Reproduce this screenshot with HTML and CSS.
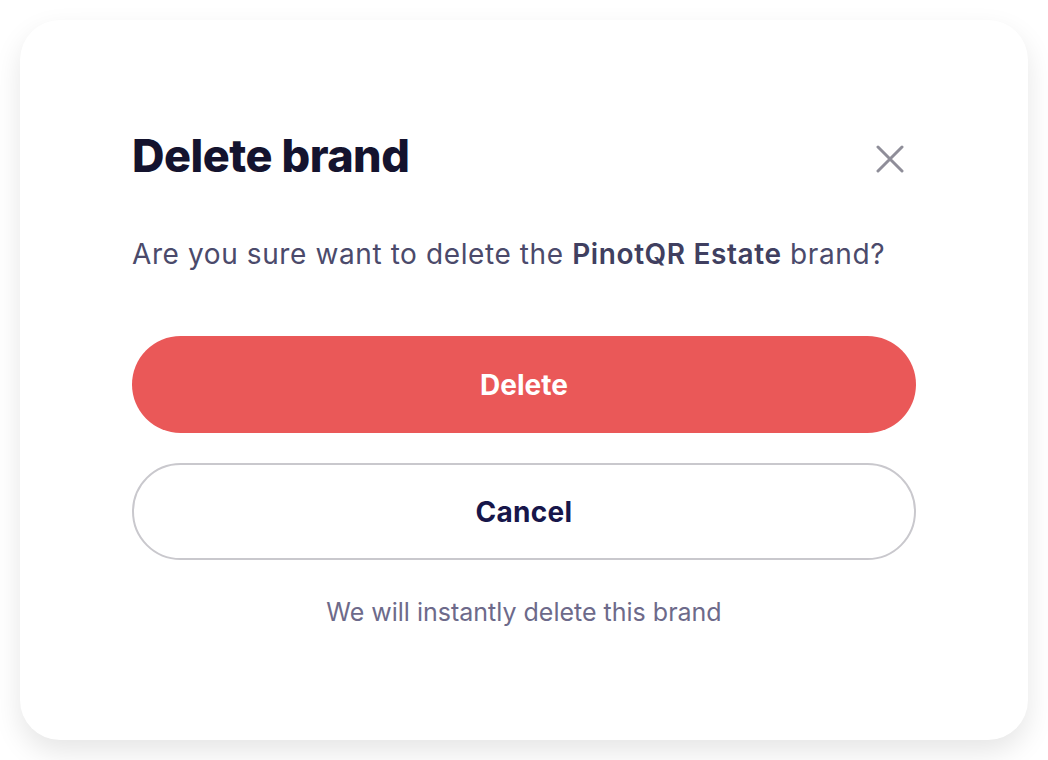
FILE: index.html
```html
<!DOCTYPE html>
<html lang="en">
<head>
<meta charset="utf-8">
<title>Delete brand</title>
<link rel="stylesheet" href="styles.css">
</head>
<body>
<div class="modal">
  <div class="modal-header">
    <h1 class="title">Delete brand</h1>
    <button class="close" aria-label="Close">
      <svg width="28" height="28" viewBox="0 0 28 28"><path d="M2 2L26 26M26 2L2 26" stroke="#8f8e99" stroke-width="3" stroke-linecap="round"/></svg>
    </button>
  </div>
  <p class="message">Are you sure want to delete the <strong>PinotQR Estate</strong> brand?</p>
  <div class="actions">
    <button class="btn btn-danger">Delete</button>
    <button class="btn btn-outline">Cancel</button>
  </div>
  <p class="note">We will instantly delete this brand</p>
</div>
</body>
</html>
```
FILE: styles.css
```css
* { box-sizing: border-box; }
html, body { margin: 0; padding: 0; background: #ffffff; }
body {
  font-family: "Inter", "Noto Sans", sans-serif;
  width: 1048px;
  height: 760px;
  padding: 20px 20px;
  overflow: hidden;
}
.modal {
  background: #fff;
  border-radius: 40px;
  height: 720px;
  padding: 100px 112px 0 112px;
  box-shadow: 0 12px 28px rgba(0, 0, 0, 0.10);
}
.modal-header {
  display: flex;
  justify-content: space-between;
  align-items: center;
}
.title {
  margin: 0;
  font-size: 45px;
  font-weight: 800;
  color: #14132e;
  letter-spacing: -0.5px;
  line-height: 72px;
}
.close {
  background: none;
  border: 0;
  padding: 0;
  margin: 6px 12px 0 0;
  width: 28px;
  height: 28px;
  display: flex;
}
.message {
  margin: 42px 0 0 0;
  font-size: 28px;
  letter-spacing: 0.6px;
  line-height: 40px;
  color: #4b4a6b;
}
.message strong { font-weight: 600; color: #403f60; }
.actions {
  margin-top: 62px;
  display: flex;
  flex-direction: column;
  gap: 30px;
}
.btn {
  height: 97px;
  border-radius: 50px;
  font-family: inherit;
  font-size: 28px;
  font-weight: 700;
  cursor: pointer;
}
.btn-danger {
  background: #ea5858;
  border: 0;
  color: #fff;
}
.btn-outline {
  background: #fff;
  border: 2px solid #c9c8cd;
  color: #17164a;
  letter-spacing: 0.3px;
}
.note {
  margin: 34px 0 0 0;
  text-align: center;
  font-size: 25px;
  line-height: 36px;
  color: #6d6a8a;
}
```
